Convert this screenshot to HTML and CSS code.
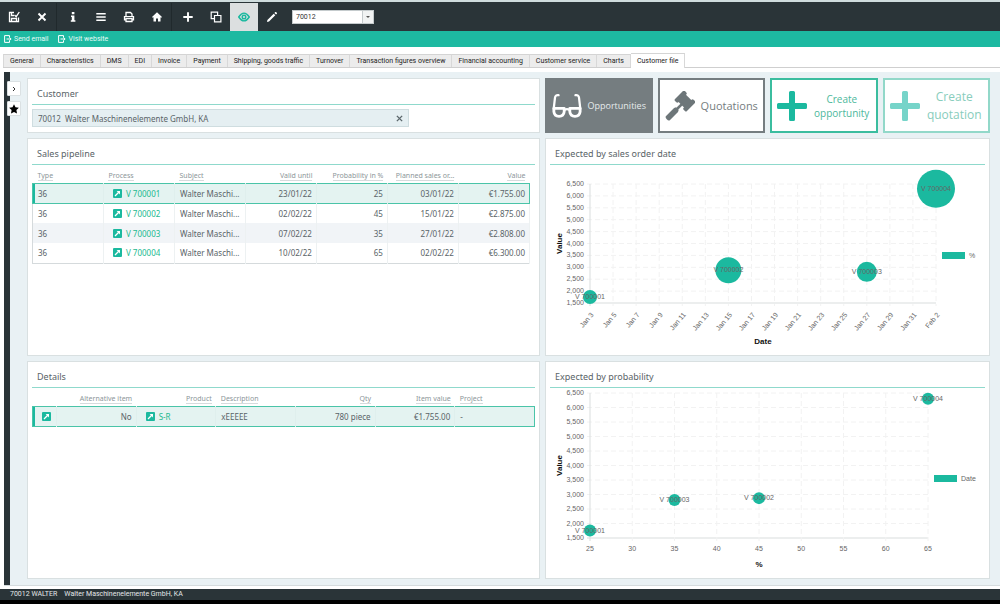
FILE: index.html
```html
<!DOCTYPE html>
<html lang="en">
<head>
    <meta charset="UTF-8">
    <meta name="viewport" content="width=device-width, initial-scale=1.0">
    <title>70012 Walter Maschinenelemente GmbH</title>
    <link rel="stylesheet" href="styles.css">
</head>

<body>
    <svg class="sprite" aria-hidden="true">
        <symbol id="icon-open" viewBox="0 0 9 9">
            <rect width="9" height="9" rx="1" fill="#1bb99f"/>
            <path d="M2 7L6 3" stroke="#fff" stroke-width="1.300"/>
            <path d="M3.600 2H7v3.400z" fill="#fff"/>
        </symbol>
        <symbol id="icon-link" viewBox="0 0 8 8">
            <path d="M5.5 2V.6H.6v6.8h4.9V6M2.5 4h4.6M5.3 2.2L7.1 4 5.3 5.8" fill="none" stroke="#fff"/>
        </symbol>
        <symbol id="icon-plus" viewBox="0 0 30 30">
            <path d="M12 1.5Q12 0 13.500 0h3Q18 0 18 1.500V12h10.500Q30 12 30 13.500v3Q30 18 28.500 18H18v10.500Q18 30 16.500 30h-3Q12 30 12 28.500V18H1.500Q0 18 0 16.500v-3Q0 12 1.500 12H12z" fill="currentColor"/>
        </symbol>
    </svg>

    <header>
        <div class="toolbar">
            <button class="tool" aria-label="Save and close"><svg viewBox="0 0 12 12"><path d="M6 1.500H1.500v9h9V6.500M3.500 1.500v3h2.500M3.500 10.500V7.500h5v3M6.500 4l1.700 1.700L11.300 1" fill="none" stroke="#fff" stroke-width="1.300"/></svg></button>
            <button class="tool" aria-label="Close"><svg viewBox="0 0 12 12"><path d="M2.500 2.500l7 7M9.500 2.500l-7 7" stroke="#fff" stroke-width="1.900"/></svg></button>
            <span class="separator"></span>
            <button class="tool" aria-label="Info"><svg viewBox="0 0 12 12"><path d="M4.800 1h2.600v2.200H4.800zM4 4.500h3.400v4.700h1v1.600H3.800V9.200h1V6H4z" fill="#fff"/></svg></button>
            <button class="tool" aria-label="Menu"><svg viewBox="0 0 12 12"><path d="M1.300 2.700h9.400M1.300 6h9.400M1.300 9.300h9.400" stroke="#fff" stroke-width="1.500"/></svg></button>
            <button class="tool" aria-label="Print"><svg viewBox="0 0 12 12"><path d="M3 5.500V1.500h4.500L9 3v2.500M3 8.800H1.500V5.700h9v3.100H9M3 7.700h6v2.800H3z" fill="none" stroke="#fff" stroke-width="1.300"/></svg></button>
            <button class="tool" aria-label="Home"><svg viewBox="0 0 12 12"><path d="M6 1.200L11 6l-.8.8-.7-.6v4.300H7V7.500H5v3H2.500V6.200l-.7.6L1 6z" fill="#fff"/></svg></button>
            <span class="separator"></span>
            <button class="tool" aria-label="New"><svg viewBox="0 0 12 12"><path d="M6 1.300v9.400M1.300 6h9.400" stroke="#fff" stroke-width="1.900"/></svg></button>
            <button class="tool" aria-label="Copy"><svg viewBox="0 0 12 12"><path d="M4.500 4.500h6.400v6.400H4.500zM4.500 7.600H1.200V1.200h6.400v3.300" fill="none" stroke="#fff" stroke-width="1.200"/></svg></button>
            <button class="tool active" aria-label="View"><svg viewBox="0 0 12 12"><path d="M.7 6Q6-1.800 11.300 6 6 13.800.7 6z" fill="none" stroke="#1bb99f" stroke-width="1.400"/><circle cx="6" cy="6" r="1.800" fill="none" stroke="#1bb99f" stroke-width="1.400"/></svg></button>
            <button class="tool" aria-label="Edit"><svg viewBox="0 0 12 12"><path d="M1 11l.4-2 6.300-6.300 1.600 1.600L3 10.600zM8.400 2l.9-.9q.4-.3.800 0l.8.8q.3.400 0 .8l-.9.900z" fill="#fff"/></svg></button>
            <div class="record">
                <select aria-label="Customer number">
                    <option>70012</option>
                </select>
                <span class="arrow"></span>
            </div>
        </div>
        <div class="links">
            <a href="#"><svg><use href="#icon-link"/></svg>Send email</a>
            <a href="#"><svg><use href="#icon-link"/></svg>Visit website</a>
        </div>
    </header>

    <nav class="tabs">
        <a href="#">General</a>
        <a href="#">Characteristics</a>
        <a href="#">DMS</a>
        <a href="#">EDI</a>
        <a href="#">Invoice</a>
        <a href="#">Payment</a>
        <a href="#">Shipping, goods traffic</a>
        <a href="#">Turnover</a>
        <a href="#">Transaction figures overview</a>
        <a href="#">Financial accounting</a>
        <a href="#">Customer service</a>
        <a href="#">Charts</a>
        <a href="#" class="current">Customer file</a>
    </nav>

    <main>
        <aside class="rail">
            <button aria-label="Expand"><svg viewBox="0 0 10 10"><path d="M4 3l2 2-2 2" fill="none" stroke="#333"/></svg></button>
            <button aria-label="Favourites"><svg viewBox="0 0 10 10"><path d="M5 .2l1.500 3.100 3.400.4-2.500 2.400.6 3.500L5 7.900 2 9.600l.6-3.500L.1 3.700l3.400-.4z" fill="#000"/></svg></button>
        </aside>

        <div class="board">
            <section class="panel">
                <h2>Customer</h2>
                <div class="lookup">
                    <input type="text" aria-label="Customer" value="70012  Walter Maschinenelemente GmbH, KA">
                    <button aria-label="Clear"><svg viewBox="0 0 8 8"><path d="M1 1l6 6M7 1L1 7" stroke="#5d686d" stroke-width="1.600"/></svg></button>
                </div>
            </section>

            <div class="actions">
                <button class="action filled">
                    <svg viewBox="0 0 32 26"><path d="M7 1.500Q3.500 1 3.200 4L1.800 16M25 1.500Q28.500 1 28.800 4L30.200 16M13.500 17Q16 15.500 18.500 17" fill="none" stroke="#fff" stroke-width="2.400" stroke-linecap="round"/><path d="M2 15.500h11v3.500q-.5 5-5.500 5T2 19zM19 15.500H30V19q-.5 5-5.500 5T19 19z" fill="none" stroke="#fff" stroke-width="3" stroke-linejoin="round"/></svg>
                    <span>Opportunities</span>
                </button>
                <button class="action medium">
                    <svg viewBox="0 0 32 32"><g transform="rotate(45 16 16)" fill="#6d7679"><rect x="7" y="1" width="5" height="15" rx="1.500"/><rect x="20" y="1" width="5" height="15" rx="1.500"/><rect x="10" y="3" width="12" height="11"/><rect x="14.600" y="12" width="2.800" height="10"/><path d="M14 20h4l1 2v12q0 2-3 2t-3-2V22z"/></g></svg>
                    <span>Quotations</span>
                </button>
                <button class="action green">
                    <svg><use href="#icon-plus"/></svg>
                    <span>Create opportunity</span>
                </button>
                <button class="action pale large">
                    <svg><use href="#icon-plus"/></svg>
                    <span>Create quotation</span>
                </button>
            </div>

            <section class="panel">
                <h2>Sales pipeline</h2>
                <table class="pipeline">
                    <thead>
                        <tr>
                            <th><span>Type</span></th>
                            <th><span>Process</span></th>
                            <th><span>Subject</span></th>
                            <th class="num"><span>Valid until</span></th>
                            <th class="num"><span>Probability in %</span></th>
                            <th class="num"><span>Planned sales or...</span></th>
                            <th class="num"><span>Value</span></th>
                        </tr>
                    </thead>
                    <tbody>
                        <tr class="selected"><td>36</td><td class="ref"><a href="#"><svg><use href="#icon-open"/></svg>V 700001</a></td><td>Walter Maschi...</td><td class="num">23/01/22</td><td class="num">25</td><td class="num">03/01/22</td><td class="num">€1.755.00</td></tr>
                        <tr><td>36</td><td class="ref"><a href="#"><svg><use href="#icon-open"/></svg>V 700002</a></td><td>Walter Maschi...</td><td class="num">02/02/22</td><td class="num">45</td><td class="num">15/01/22</td><td class="num">€2.875.00</td></tr>
                        <tr><td>36</td><td class="ref"><a href="#"><svg><use href="#icon-open"/></svg>V 700003</a></td><td>Walter Maschi...</td><td class="num">07/02/22</td><td class="num">35</td><td class="num">27/01/22</td><td class="num">€2.808.00</td></tr>
                        <tr><td>36</td><td class="ref"><a href="#"><svg><use href="#icon-open"/></svg>V 700004</a></td><td>Walter Maschi...</td><td class="num">10/02/22</td><td class="num">65</td><td class="num">02/02/22</td><td class="num">€6.300.00</td></tr>
                    </tbody>
                </table>
            </section>

            <section class="panel">
                <h2>Expected by sales order date</h2>
                <svg class="chart" id="date-chart" viewBox="0 0 435 188"></svg>
            </section>

            <section class="panel">
                <h2>Details</h2>
                <table class="details">
                    <thead>
                        <tr>
                            <th class="open"></th>
                            <th class="num"><span>Alternative item</span></th>
                            <th class="num"><span>Product</span></th>
                            <th><span>Description</span></th>
                            <th class="num"><span>Qty</span></th>
                            <th class="num"><span>Item value</span></th>
                            <th><span>Project</span></th>
                        </tr>
                    </thead>
                    <tbody>
                        <tr class="selected"><td class="ref"><a href="#" aria-label="Open"><svg><use href="#icon-open"/></svg></a></td><td class="num">No</td><td class="ref"><a href="#"><svg><use href="#icon-open"/></svg>S-R</a></td><td>xEEEEE</td><td class="num">780 piece</td><td class="num">€1.755.00</td><td>-</td></tr>
                    </tbody>
                </table>
            </section>

            <section class="panel">
                <h2>Expected by probability</h2>
                <svg class="chart" id="probability-chart" viewBox="0 0 435 188"></svg>
            </section>
        </div>
    </main>

    <footer>
        <span>70012 WALTER</span>
        <span>Walter Maschinenelemente GmbH, KA</span>
    </footer>

    <script src="charts.js"></script>
</body>
</html>
```
FILE: styles.css
```css
*{
    margin: 0;
    padding: 0;
    box-sizing: border-box;
}
body{
    font-family: "Noto Sans", "Open Sans", sans-serif;
    font-size: 8px;
    color: #5a6468;
    background-color: #fff;
    min-height: 100vh;
    display: flex;
    flex-direction: column;
}
a{
    text-decoration: none;
    color: inherit;
}
button{
    font: inherit;
    border: none;
    background: none;
    cursor: pointer;
}
svg{
    display: block;
}
.sprite{
    display: none;
}

/* header */
.toolbar{
    display: flex;
    align-items: center;
    height: 31px;
    background-color: #2a3438;
    border-top: 2px solid #cfdcdd;
}
.tool{
    width: 28px;
    height: 28px;
    display: flex;
    align-items: center;
    justify-content: center;
}
.tool svg{
    width: 12px;
    height: 12px;
}
.tool.active{
    background-color: #dcdfe0;
}
.separator{
    width: 3px;
    height: 28px;
    border-left: 1px solid #20292c;
}
.record{
    position: relative;
    margin-left: 6px;
}
.record select{
    display: block;
    width: 82px;
    height: 14px;
    padding-left: 3px;
    appearance: none;
    border: 1px solid #c5cbcd;
    border-radius: 0;
    background-color: #fff;
    font-family: Roboto, sans-serif;
    font-size: 7px;
    color: #333;
}
.record .arrow{
    position: absolute;
    top: 1px;
    right: 1px;
    width: 11px;
    height: 12px;
    background-color: #f1f3f3;
    border-left: 1px solid #c5cbcd;
    pointer-events: none;
}
.record .arrow::after{
    content: "";
    position: absolute;
    top: 5px;
    left: 3px;
    border: 2px solid transparent;
    border-top-color: #555;
}
.links{
    display: flex;
    align-items: center;
    gap: 10px;
    height: 16px;
    padding-left: 4px;
    background-color: #1db9a1;
    color: #e8fbf7;
    font-family: Roboto, sans-serif;
    font-size: 7px;
}
.links a{
    display: flex;
    align-items: center;
    gap: 2px;
}
.links svg{
    width: 8px;
    height: 8px;
}

/* tabs */
.tabs{
    display: flex;
    align-items: flex-end;
    margin: 5px 0 0 3px;
    height: 16px;
    border-bottom: 1px solid #cfcfcf;
    font-family: Roboto, sans-serif;
    font-size: 7px;
    color: #222;
}
.tabs a{
    height: 13px;
    line-height: 13px;
    padding: 0 6px;
    background-color: #ececec;
    border-top: 1px solid #d4d4d4;
    border-right: 1px solid #d8d8d8;
    white-space: nowrap;
}
.tabs a:first-child{
    border-left: 1px solid #d8d8d8;
}
.tabs a.current{
    height: 15px;
    line-height: 14px;
    margin-bottom: -1px;
    background-color: #fff;
}

/* board */
main{
    flex: 1;
    display: flex;
    margin: 4px 0 3px 4px;
    background-color: #e9f1f4;
    border-bottom: 1px solid #d5dcde;
}
.rail{
    width: 17px;
    padding: 9px 0 0 3px;
    background: linear-gradient(#2a3438, #2a3438) left / 6px 100% no-repeat;
    display: flex;
    flex-direction: column;
    gap: 5px;
}
.rail button{
    width: 14px;
    height: 15px;
    display: flex;
    align-items: center;
    justify-content: center;
    background-color: #fff;
    border: 1px solid #dbe1e3;
    border-radius: 1px;
}
.rail svg{
    flex: none;
    width: 10px;
    height: 10px;
}
.board{
    flex: 1;
    display: grid;
    grid-template-columns: 513fr 445fr;
    grid-template-rows: 55px 1fr 1fr;
    gap: 5px;
    padding: 6px 10px 6px 6px;
}
.panel{
    padding: 0 4px;
    min-width: 0;
    background-color: #fff;
    border: 1px solid #d9e0e1;
}
.panel h2{
    height: 26px;
    padding: 6px 5px 0;
    border-bottom: 1px solid #8fd9cc;
    font-size: 9px;
    line-height: 18px;
    font-weight: normal;
}
.lookup{
    display: flex;
    align-items: center;
    width: 75%;
    height: 18px;
    margin-top: 4px;
    padding: 0 5px;
    background-color: #e5eff2;
    border: 1px solid #cfdde0;
}
.lookup input{
    flex: 1;
    border: none;
    outline: none;
    background: none;
    font: inherit;
    color: inherit;
    white-space: pre;
}
.lookup svg{
    width: 7px;
    height: 7px;
}

/* actions */
.actions{
    display: grid;
    grid-template-columns: repeat(4, 1fr);
    gap: 5px;
}
.action{
    display: flex;
    align-items: center;
    gap: 4px;
    min-width: 0;
    padding: 0 3px 0 5px;
    background-color: #fff;
    border: 2px solid #757d80;
    color: #757d80;
    font-family: "Open Sans", sans-serif;
    font-size: 10px;
    line-height: 14px;
}
.action svg{
    flex: none;
    width: 30px;
    height: 30px;
}
.action span{
    flex: 1;
    text-align: center;
}
.action.medium{
    font-size: 11px;
}
.action.large{
    font-size: 12px;
    line-height: 18px;
}
.action.filled{
    background-color: #757d80;
    color: #e6ebec;
    font-size: 9px;
}
.action.green{
    border-color: #3bbd9f;
    color: #4cb89c;
}
.action.green svg{
    color: #1bb99f;
}
.action.pale{
    border-color: #92d8c9;
    color: #88cdbc;
}
.action.pale svg{
    color: #76d4c9;
}

/* tables */
table{
    width: 100%;
    table-layout: fixed;
    border-collapse: collapse;
}
.pipeline{
    width: 99%;
}
th{
    height: 18px;
    padding: 4px 4px 0 5px;
    font-size: 7px;
    font-weight: normal;
    text-align: left;
    white-space: nowrap;
    color: #8c9699;
}
th span{
    display: inline-block;
    line-height: 9px;
    border-bottom: 1px solid #d6dbdd;
}
th.open{
    width: 24px;
}
td{
    height: 20px;
    padding: 0 4px 0 5px;
    border-right: 1px solid #edf1f2;
    white-space: nowrap;
}
.num{
    text-align: right;
}
tbody{
    border: 1px solid #d5dadc;
}
tbody tr:nth-child(3){
    background-color: #f1f4f7;
}
tr.selected{
    background-color: #e4f3f1;
    border: 1px solid #4ac4a8;
}
tr.selected td{
    border-right-color: #dfefed;
}
tr.selected td:last-child{
    border-right-color: #4ac4a8;
}
tr.selected td:first-child{
    box-shadow: inset 2px 0 #1bb99f;
}
.ref a{
    display: flex;
    align-items: center;
    gap: 4px;
    padding-left: 4px;
    color: #1bb98f;
}
.ref svg{
    width: 9px;
    height: 9px;
}

/* charts */
.chart{
    width: 100%;
    font-family: "Liberation Sans", Arial, sans-serif;
    font-size: 7px;
    fill: #666;
}
.chart .grid{
    stroke: #f2f2f2;
    stroke-dasharray: 5 3;
}
.chart .axis{
    stroke: #d9dddd;
}
.chart .mark{
    fill: #1bb99f;
}
.chart .title{
    font-size: 8px;
    font-weight: bold;
    fill: #111;
}

footer{
    display: flex;
    gap: 7px;
    height: 15px;
    padding-left: 10px;
    background-color: #2a3438;
    border-bottom: 4px solid #000;
    color: #e3e7e8;
    font-family: Roboto, sans-serif;
    font-size: 7px;
    line-height: 11px;
}
```
FILE: charts.js
```js
const SVG = 'http://www.w3.org/2000/svg';

function add(svg, tag, attrs, text) {
  const el = document.createElementNS(SVG, tag);
  for (const name in attrs) {
    el.setAttribute(name, attrs[name]);
  }
  if (text) el.textContent = text;
  svg.appendChild(el);
}

function drawChart(id, options) {
  const svg = document.getElementById(id);
  const { left, right, top, bottom, ticks, points } = options;
  const first = ticks[0].value;
  const last = ticks[ticks.length - 1].value;
  const x = v => left + (v - first) / (last - first) * (right - left);
  const y = v => bottom - (v - 1500) / 5000 * (bottom - top);

  for (let v = 1500; v <= 6500; v += 500) {
    add(svg, 'line', { x1: left - 3, x2: right, y1: y(v), y2: y(v), class: v === 1500 ? 'axis' : 'grid' });
    add(svg, 'text', { x: left - 6, y: y(v) + 2, 'text-anchor': 'end' }, v.toLocaleString('en-US'));
  }
  ticks.forEach((tick, i) => {
    const tx = x(tick.value);
    add(svg, 'line', { x1: tx, x2: tx, y1: top, y2: bottom + 3, class: i === 0 ? 'axis' : 'grid' });
    if (options.rotate) {
      add(svg, 'text', { x: tx + 4, y: bottom + 12, 'text-anchor': 'end', transform: `rotate(-50 ${tx + 4} ${bottom + 12})` }, tick.label);
    } else {
      add(svg, 'text', { x: tx, y: bottom + 13, 'text-anchor': 'middle' }, tick.label);
    }
  });

  const middle = (top + bottom) / 2;
  add(svg, 'text', { x: 12, y: middle, 'text-anchor': 'middle', class: 'title', transform: `rotate(-90 12 ${middle})` }, 'Value');
  add(svg, 'text', { x: (left + right) / 2, y: 179, 'text-anchor': 'middle', class: 'title' }, options.title);

  points.forEach(p => {
    add(svg, 'circle', { cx: x(p.x), cy: y(p.value), r: p.size, class: 'mark' });
    add(svg, 'text', { x: x(p.x), y: y(p.value) + 2, 'text-anchor': 'middle' }, p.label);
  });

  add(svg, 'rect', { x: right + 6, y: 87, width: 23, height: 7, class: 'mark' });
  add(svg, 'text', { x: right + 33, y: 93 }, options.legend);
}

const dateTicks = [];
for (let day = 3; day <= 33; day += 2) {
  dateTicks.push({ value: day, label: day > 31 ? `Feb ${day - 31}` : `Jan ${day}` });
}

const percentTicks = [];
for (let p = 25; p <= 65; p += 5) {
  percentTicks.push({ value: p, label: String(p) });
}

drawChart('date-chart', {
  left: 40, right: 386, top: 19, bottom: 138,
  ticks: dateTicks,
  rotate: true,
  title: 'Date',
  legend: '%',
  points: [
    { x: 3, value: 1755, size: 7, label: 'V 700001' },
    { x: 15, value: 2875, size: 13, label: 'V 700002' },
    { x: 27, value: 2808, size: 10, label: 'V 700003' },
    { x: 33, value: 6300, size: 19, label: 'V 700004' }
  ]
});

drawChart('probability-chart', {
  left: 40, right: 378, top: 5, bottom: 150,
  ticks: percentTicks,
  title: '%',
  legend: 'Date',
  points: [
    { x: 25, value: 1755, size: 6, label: 'V 700001' },
    { x: 35, value: 2808, size: 6, label: 'V 700003' },
    { x: 45, value: 2875, size: 6, label: 'V 700002' },
    { x: 65, value: 6300, size: 6, label: 'V 700004' }
  ]
});
```
